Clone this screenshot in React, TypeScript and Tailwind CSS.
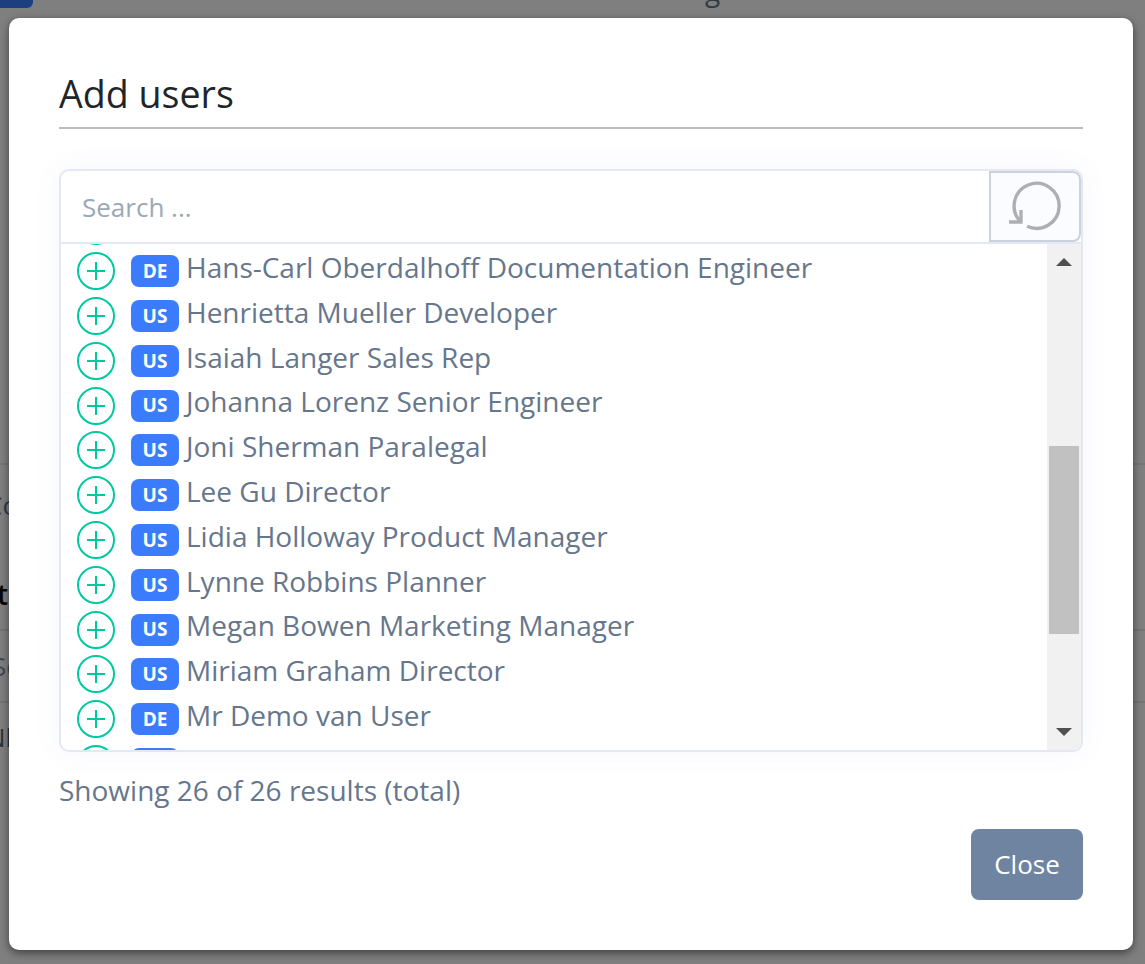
const font = "font-['Open_Sans',sans-serif]";

const users = [
  { country: 'US', name: 'Grady Archie Designer' },
  { country: 'DE', name: 'Hans-Carl Oberdalhoff Documentation Engineer' },
  { country: 'US', name: 'Henrietta Mueller Developer' },
  { country: 'US', name: 'Isaiah Langer Sales Rep' },
  { country: 'US', name: 'Johanna Lorenz Senior Engineer' },
  { country: 'US', name: 'Joni Sherman Paralegal' },
  { country: 'US', name: 'Lee Gu Director' },
  { country: 'US', name: 'Lidia Holloway Product Manager' },
  { country: 'US', name: 'Lynne Robbins Planner' },
  { country: 'US', name: 'Megan Bowen Marketing Manager' },
  { country: 'US', name: 'Miriam Graham Director' },
  { country: 'DE', name: 'Mr Demo van User' },
  { country: 'US', name: 'Nestor' },
];

const UserRow = ({ country, name }: { country: string; name: string }) => (
  <div className="flex h-[44.8px] items-center pl-[16px]">
    <button className="flex h-[38px] w-[38px] shrink-0 items-center justify-center rounded-full border-[2.5px] border-[#00c9a0]">
      <svg width="18" height="18" viewBox="0 0 18 18" fill="none" stroke="#00c9a0" strokeWidth="2">
        <path d="M0 9H18M9 0V18" />
      </svg>
    </button>
    <span className="ml-[16px] flex h-[32px] w-[48px] shrink-0 items-center justify-center rounded-[8px] bg-[#3b7cff] text-[19px] font-bold text-white">
      {country}
    </span>
    <span className="ml-[7px] -mt-[8.4px] whitespace-nowrap text-[28px] leading-[38px] text-[#66768c]">{name}</span>
  </div>
);

const App = () => {
  return (
    <div className={`relative h-[964px] w-[1145px] overflow-hidden bg-white ${font}`}>
      {/* Page behind the dialog */}
      <div className="flex h-[8px]">
        <div className="h-[8px] w-[33px] rounded-br-[6px] bg-[#3b7cff]" />
        <span className="ml-[672px] -mt-[29px] text-[28px] leading-[38px] text-[#66768c]">g</span>
      </div>
      <div className="h-[457px] border-b-[2px] border-[#e9e9e9]" />
      <div className="h-[166px] border-b-[2px] border-[#e9e9e9] pt-[22px]">
        <p className="-ml-[14px] text-[26px] leading-[36px] text-[#66768c]">Co</p>
        <p className="-ml-[3px] mt-[52px] text-[28px] font-semibold leading-[38px] text-[#111111]">t</p>
      </div>
      <div className="h-[72px] border-b-[2px] border-[#e9e9e9] pt-[17px]">
        <p className="-ml-[8px] text-[26px] leading-[36px] text-[#8593a6]">Se</p>
      </div>
      <p className="-ml-[14px] pt-[16px] text-[26px] leading-[36px] text-[#5a6a80]">Nl</p>

      <div className="absolute inset-0 bg-black/50" />

      {/* Dialog */}
      <div className="absolute left-[9px] top-[18px] flex h-[932px] w-[1124px] flex-col rounded-[10px] bg-white px-[50px] pt-[50px] shadow-[0_3px_8px_rgba(0,0,0,0.5)]">
        <h2 className="h-[61px] border-b-[2px] border-[#bdbdbd] text-[37.6px] font-medium leading-[52px] text-[#212529]">
          Add users
        </h2>

        <div className="mt-[40px] h-[583px] overflow-hidden rounded-[10px] border-[2px] border-[#e4e8f4] shadow-[0_0_30px_rgba(80,110,220,0.06)]">
          <div className="flex h-[73px] border-b-[2px] border-[#e4e8f4]">
            <input
              placeholder="Search ..."
              className="min-w-0 flex-1 bg-transparent pl-[21px] pt-[2px] text-[26px] text-[#66768c] outline-none placeholder:text-[#9aa8b8]"
            />
            <button className="flex w-[92px] items-center justify-center rounded-r-[8px] border-[2px] border-[#ccd2dc] bg-[#fbfcff]">
              <svg width="54" height="54" viewBox="0 0 54 54" fill="none" stroke="#adafb2" strokeWidth="3.4">
                <path d="M19.1 46.2 A22.5 22.5 0 1 0 13 42" />
                <path d="M13 30 V42 H1" />
              </svg>
            </button>
          </div>

          <div className="flex h-[506px]">
            <div className="min-w-0 flex-1 overflow-hidden">
              <div className="-mt-[40px]">
                {users.map((user) => (
                  <UserRow key={user.name} country={user.country} name={user.name} />
                ))}
              </div>
            </div>

            {/* Scrollbar */}
            <div className="flex w-[34px] shrink-0 flex-col items-center bg-[#f1f1f1]">
              <div className="mt-[14px] h-0 w-0 border-x-[8px] border-b-[8px] border-x-transparent border-b-[#505050]" />
              <div className="mt-[180px] h-[188px] w-[30px] bg-[#c1c1c1]" />
              <div className="mt-[94px] h-0 w-0 border-x-[8px] border-t-[8px] border-x-transparent border-t-[#505050]" />
            </div>
          </div>
        </div>

        <p className="mt-[19px] text-[28px] leading-[38px] text-[#66768c]">Showing 26 of 26 results (total)</p>

        <div className="mt-[20px] flex justify-end">
          <button className="h-[71px] w-[112px] rounded-[8px] bg-[#6f84a0] text-[26px] text-white">Close</button>
        </div>
      </div>
    </div>
  );
};

export default App;
